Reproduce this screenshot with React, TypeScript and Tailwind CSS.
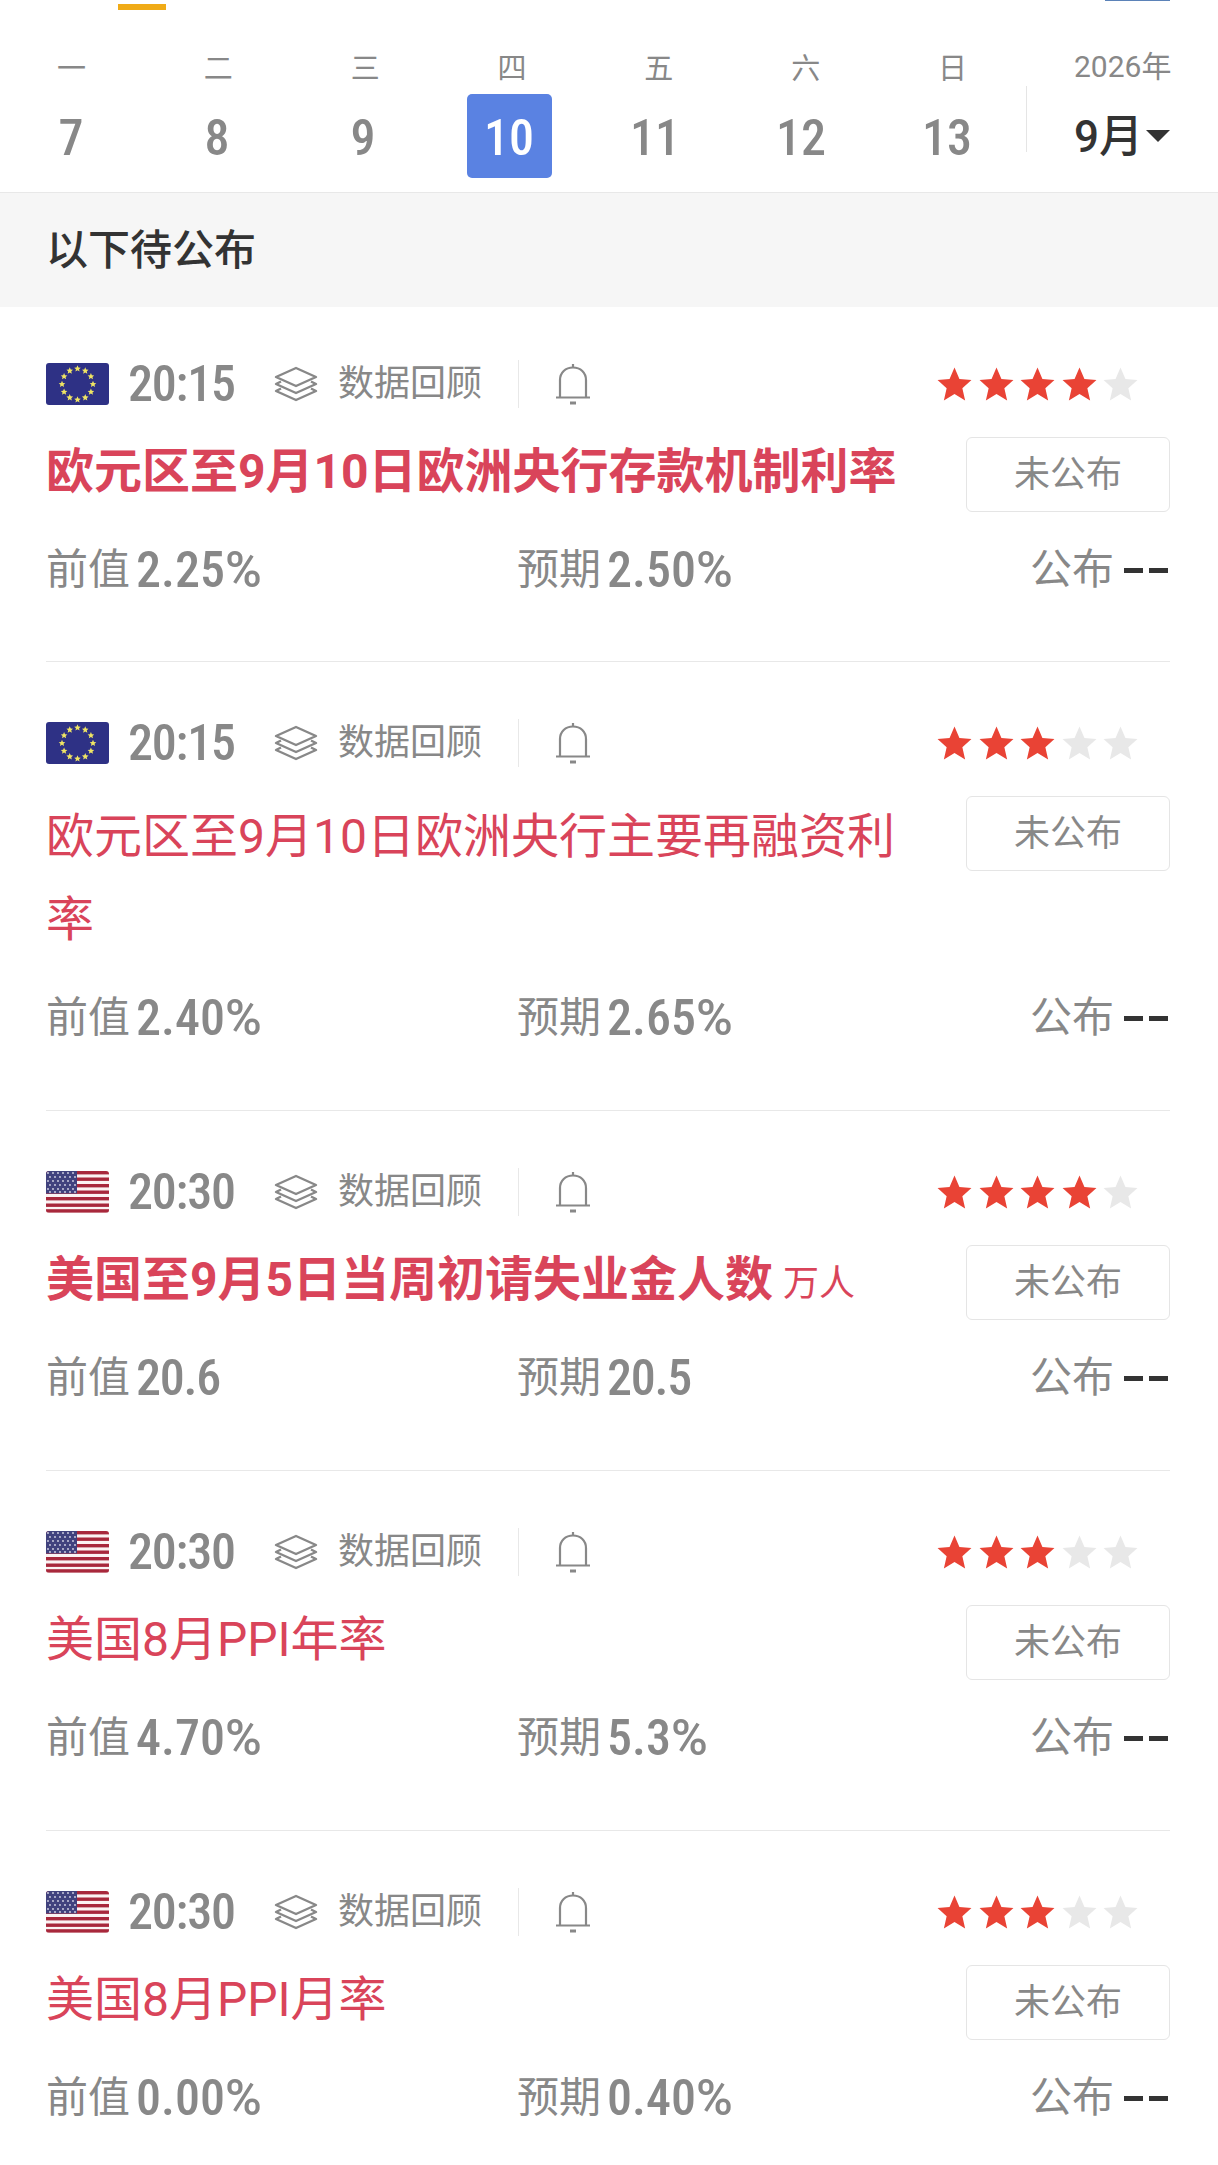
const weekdays = ['一', '二', '三', '四', '五', '六', '日'];
const dates = [
  { date: '7' },
  { date: '8' },
  { date: '9' },
  { date: '10', active: true },
  { date: '11' },
  { date: '12' },
  { date: '13' },
];

const events = [
  { flag: 'eu', time: '20:15', stars: 4, title: '欧元区至9月10日欧洲央行存款机制利率', bold: true, prev: '2.25%', expect: '2.50%' },
  { flag: 'eu', time: '20:15', stars: 3, title: '欧元区至9月10日欧洲央行主要再融资利率', wrap: true, prev: '2.40%', expect: '2.65%' },
  { flag: 'us', time: '20:30', stars: 4, title: '美国至9月5日当周初请失业金人数', unit: '万人', bold: true, prev: '20.6', expect: '20.5' },
  { flag: 'us', time: '20:30', stars: 3, title: '美国8月PPI年率', prev: '4.70%', expect: '5.3%' },
  { flag: 'us', time: '20:30', stars: 3, title: '美国8月PPI月率', prev: '0.00%', expect: '0.40%' },
];

const STAR = '12,1 15.2,8.4 23,9.1 17.1,14.4 18.9,22.3 12,18.2 5.1,22.3 6.9,14.4 1,9.1 8.8,8.4';

function Din({ children, className = '' }: { children: React.ReactNode; className?: string }) {
  return <span className={`inline-block font-medium [font-stretch:75%] ${className}`}>{children}</span>;
}

function Value({ value }: { value: string }) {
  const percent = value.endsWith('%');
  return (
    <Din className={`ml-[6px] text-[50px] leading-none ${percent ? '' : 'tracking-[-1.2px]'}`}>
      {percent ? value.slice(0, -1) : value}
      {percent && <span className="[font-stretch:100%]">%</span>}
    </Din>
  );
}

function EuFlag() {
  const stars = Array.from({ length: 12 }, (_, i) => {
    const a = (i * Math.PI) / 6;
    return { x: 31.5 + 15.5 * Math.sin(a), y: 21 - 15.5 * Math.cos(a) };
  });
  return (
    <svg width="63" height="42" viewBox="0 0 63 42" className="rounded-[3px]">
      <rect width="63" height="42" fill="#2e3185" />
      {stars.map((s, i) => (
        <polygon key={i} points={STAR} fill="#f0e564" transform={`translate(${s.x - 3.6} ${s.y - 3.6}) scale(.3)`} />
      ))}
    </svg>
  );
}

function UsFlag() {
  return (
    <svg width="63" height="42" viewBox="0 0 63 42" className="rounded-[3px]">
      <rect width="63" height="42" fill="#fbf3f3" />
      {[0, 6.5, 13, 19.5, 26, 32.5, 38.2].map((y) => (
        <rect key={y} y={y} width="63" height="3.4" fill="#a8283c" />
      ))}
      <rect width="31" height="22.5" fill="#41427e" />
      {[2, 6, 10, 14, 18, 21].map((y, r) =>
        [2, 7, 12, 17, 22, 27].map((x) => (
          <circle key={x} cx={r % 2 ? x + 2 : x} cy={y} r="0.9" fill="#d8d8e8" />
        )),
      )}
    </svg>
  );
}

function LayersIcon() {
  return (
    <svg width="44" height="36" viewBox="0 0 44 36" fill="none" stroke="#888" strokeWidth="2.4" strokeLinejoin="round">
      <path d="M22 2 42 11 22 20 2 11Z" />
      <path d="M7 15.5 2 18 22 27 42 18 37 15.5" />
      <path d="M7 22.5 2 25 22 34 42 25 37 22.5" />
    </svg>
  );
}

function BellIcon() {
  return (
    <svg width="36" height="42" viewBox="0 0 36 42" fill="none" stroke="#888" strokeWidth="2.2">
      <path d="M5 34V17C5 9.5 10.5 4.5 18 4.5S31 9.5 31 17V34" />
      <path d="M1 34.5H35" />
      <path d="M18 1V4.5" />
      <path d="M15 40H21" strokeWidth="3" />
    </svg>
  );
}

function Stars({ count }: { count: number }) {
  return (
    <div className="flex w-[203px] justify-between">
      {[0, 1, 2, 3, 4].map((i) => (
        <svg key={i} width="37" height="37" viewBox="0 0 24 24">
          <polygon points={STAR} fill={i < count ? '#e94335' : '#e8e8e8'} />
        </svg>
      ))}
    </div>
  );
}

function EventRow({ item, first }: { item: (typeof events)[number]; first: boolean }) {
  return (
    <div className={first ? 'pb-[66px] pt-[53px]' : 'border-t border-[#e8e8e8] pb-[67px] pt-[57px]'}>
      <div className="flex h-[48px] items-center">
        {item.flag === 'eu' ? <EuFlag /> : <UsFlag />}
        <Din className="ml-[19px] w-[146px] text-[50px] leading-none tracking-[-1.2px]">{item.time}</Din>
        <LayersIcon />
        <span className="ml-[20px] text-[36px] leading-none">数据回顾</span>
        <div className="ml-[36px] h-[48px] w-px bg-[#e8e8e8]" />
        <div className="ml-[36px]">
          <BellIcon />
        </div>
        <div className="ml-auto mr-[31px]">
          <Stars count={item.stars} />
        </div>
      </div>
      <div className="mt-[22px] flex items-start justify-between">
        <div
          className={`w-[880px] text-[48px] leading-[83px] text-[#d9445a] ${item.bold ? 'font-bold' : 'font-normal'} ${
            item.wrap ? 'pt-[6px]' : ''
          }`}
        >
          {item.title}
          {item.unit && <span className="ml-2.5 text-[36px] font-normal leading-none">{item.unit}</span>}
        </div>
        <div className="mt-[7px] flex h-[75px] w-[204px] items-center justify-center rounded-md border border-[#e5e5e5] text-[36px]">
          未公布
        </div>
      </div>
      <div className="mt-[32px] flex h-[50px] items-center text-[42px] leading-none">
        <div className="flex w-[471px] items-center">
          前值
          <Value value={item.prev} />
        </div>
        <div className="flex items-center">
          预期
          <Value value={item.expect} />
        </div>
        <div className="ml-auto mr-[2px] flex items-center">
          公布
          <span className="ml-[10px] flex gap-[6px]">
            <span className="h-[5px] w-[19px] bg-[#333]" />
            <span className="h-[5px] w-[19px] bg-[#333]" />
          </span>
        </div>
      </div>
    </div>
  );
}

export default function App() {
  return (
    <div className="h-[2165px] w-[1218px] overflow-hidden bg-white font-['Roboto','Noto_Sans_CJK_SC',sans-serif] text-[#888]">
      {/* Tab markers */}
      <div className="relative h-[50px]">
        <div className="absolute left-[118px] top-[4px] h-[6px] w-[48px] bg-[#f0ab17]" />
        <div className="absolute left-[1105px] top-0 h-px w-[65px] bg-[#5b82b8]" />
      </div>

      {/* Calendar strip */}
      <div className="flex h-[143px] border-b border-[#e8e8e8]">
        <div className="-ml-0.5 w-[1028px] shrink-0">
          <div className="mt-[2px] grid grid-cols-7 text-center text-[29px] leading-[34px]">
            {weekdays.map((w) => (
              <span key={w}>{w}</span>
            ))}
          </div>
          <div className="mt-[8px] grid w-[1022px] grid-cols-7">
            {dates.map((d) => (
              <div key={d.date} className="flex justify-center">
                <div
                  className={`flex h-[84px] w-[85px] items-center justify-center rounded-[5px] ${
                    d.active ? 'bg-[#5a82e2] text-white' : ''
                  }`}
                >
                  <Din className="mt-[3px] text-[50px] leading-none">{d.date}</Din>
                </div>
              </div>
            ))}
          </div>
        </div>
        <div className="mt-[36px] h-[66px] w-px bg-[#e5e5e5]" />
        <div className="ml-[47px] flex flex-col">
          <span className="-mt-[1px] text-[30px] leading-[36px]">2026年</span>
          <div className="mt-[22px] flex items-center text-[#333]">
            <span className="text-[44px] font-medium leading-[60px]">9月</span>
            <span className="ml-[3px] mt-[-2px] h-0 w-0 border-x-[12px] border-t-[12px] border-x-transparent border-t-[#333]" />
          </div>
        </div>
      </div>

      <div className="flex h-[114px] items-center bg-[#f6f6f6] pl-[46px] pt-[2px] text-[42px] font-medium leading-none text-[#333]">
        以下待公布
      </div>

      <div className="pl-[46px] pr-[48px]">
        {events.map((item, i) => (
          <EventRow key={item.title} item={item} first={i === 0} />
        ))}
      </div>
    </div>
  );
}
